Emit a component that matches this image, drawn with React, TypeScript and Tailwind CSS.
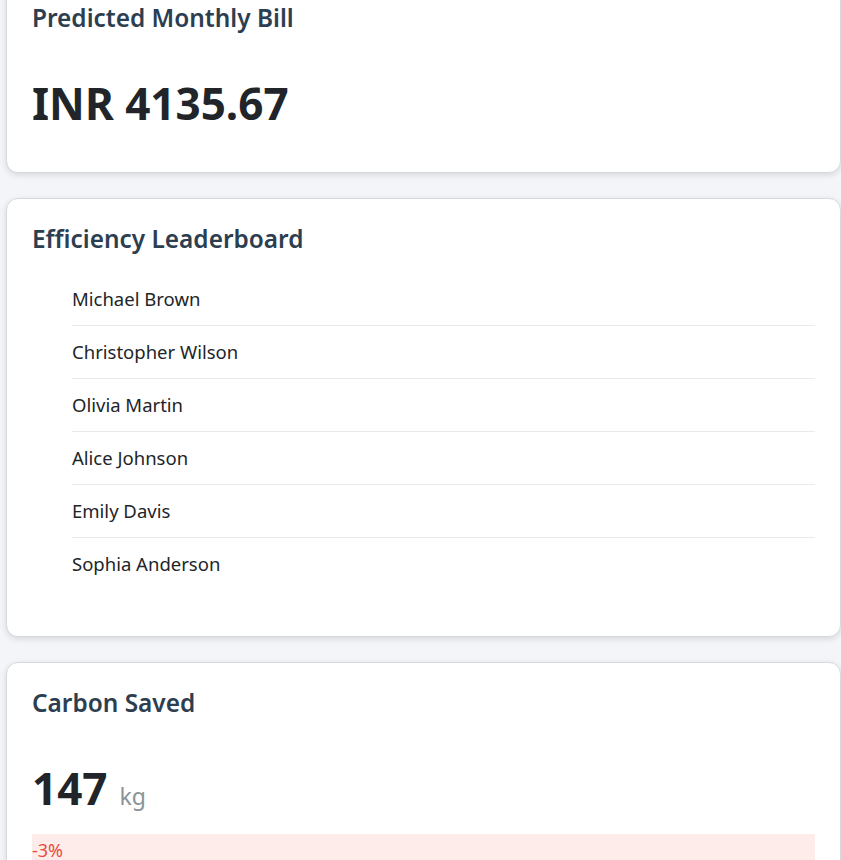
const leaders = [
  "Michael Brown",
  "Christopher Wilson",
  "Olivia Martin",
  "Alice Johnson",
  "Emily Davis",
  "Sophia Anderson",
];

function Card({ title, children, className = "" }: { title: string; children: React.ReactNode; className?: string }) {
  return (
    <section
      className={`rounded-xl border border-[#d8d9dd] bg-white px-[25px] pt-[24px] shadow-[0_2px_6px_rgba(0,0,0,0.12)] ${className}`}
    >
      <h2 className="text-[24.4px] font-semibold leading-[32px] text-[#2c3e50]">{title}</h2>
      {children}
    </section>
  );
}

export default function App() {
  return (
    <div
      className="min-h-screen overflow-hidden bg-[#f4f5f9] pl-[6px]"
      style={{ fontFamily: '"Noto Sans", "Open Sans", sans-serif' }}
    >
      <div className="-mt-[23px] flex flex-col gap-[25px]">
        <Card title="Predicted Monthly Bill" className="pb-[40px]">
          <p className="mt-[40px] text-[44px] font-bold leading-[58px] text-[#212529]">INR 4135.67</p>
        </Card>

        <Card title="Efficiency Leaderboard" className="pb-[46px]">
          <ul className="mt-[18px] pl-[40px]">
            {leaders.map((name, i) => (
              <li
                key={name}
                className={`py-3 text-[18.5px] leading-[28px] text-[#212529] ${
                  i < leaders.length - 1 ? "border-b border-[#e9eaec]" : ""
                }`}
              >
                {name}
              </li>
            ))}
          </ul>
        </Card>

        <Card title="Carbon Saved" className="pb-[40px]">
          <p className="mt-[40px] flex items-baseline text-[#212529]">
            <span className="text-[44px] font-bold leading-[58px]">147</span>
            <span className="ml-[12px] text-[23px] text-[#8a9396]">kg</span>
          </p>
          <div className="mt-[17px] bg-[#fdecea] pt-[4px] pb-[8px] text-[18px] leading-[24px] text-[#e74c3c]">-3%</div>
        </Card>
      </div>
    </div>
  );
}
